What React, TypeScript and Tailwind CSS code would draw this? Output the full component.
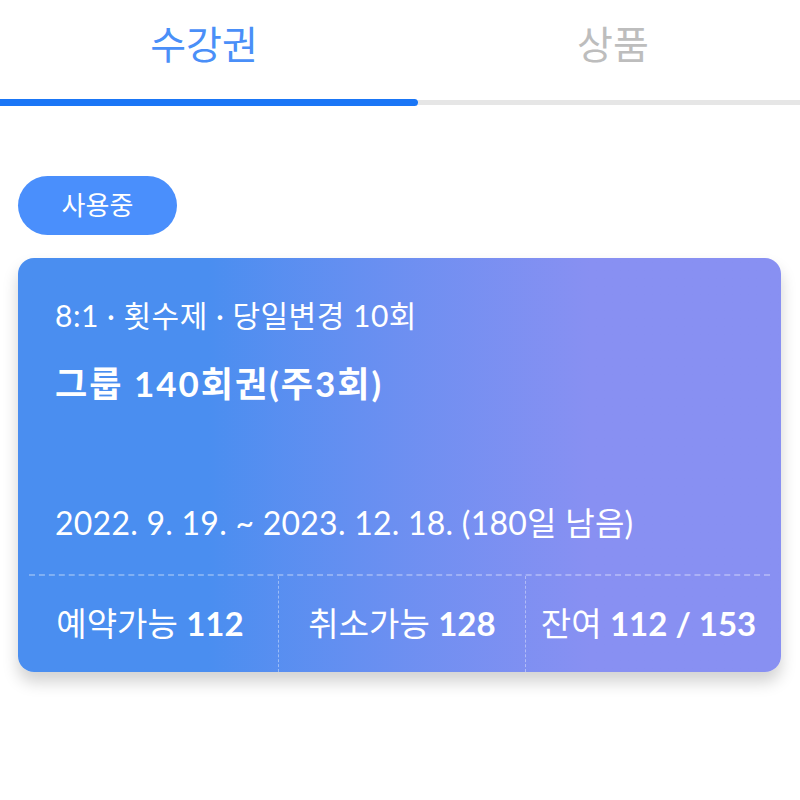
export default function App() {
  const font = { fontFamily: 'Lato, "Noto Sans CJK KR", sans-serif' };
  return (
    <div className="w-[800px] h-[800px] bg-white overflow-hidden" style={font}>
      <div className="flex h-[98px]">
        <div className="w-[418px] flex justify-center items-center pb-[10px] pr-[10px] text-[39px] text-[#4a8ff8]">수강권</div>
        <div className="flex-1 flex justify-center items-center pb-[10px] pl-[8px] text-[39px] text-[#bdbdbd]">상품</div>
      </div>
      <div className="flex items-center h-[8px]">
        <div className="w-[418px] h-[7px] bg-[#1a76f6] rounded-r-full"></div>
        <div className="flex-1 h-[5px] bg-[#e6e6e6]"></div>
      </div>
      <div className="px-[18px] pt-[70px]">
        <div className="w-[159px] h-[59px] rounded-full bg-[#4a8ffc] text-white text-[26px] flex items-center justify-center">사용중</div>
        <div className="mt-[23px] w-[763px] h-[414px] rounded-[16px] bg-linear-to-r from-[#4a8ef0] from-25% to-[#8890f2] to-75% text-white shadow-[0_10px_16px_rgba(0,0,0,0.18)] flex flex-col">
          <div className="px-[37px] pt-[37px] flex-1 flex flex-col">
            <div className="text-[30px] leading-[40px] tracking-[0.5px]">8:1 · 횟수제 · 당일변경 10회</div>
            <div className="text-[35px] font-bold leading-[40px] mt-[28px] tracking-[2px]">그룹 140회권(주3회)</div>
            <div className="text-[32px] leading-[40px] mt-auto mb-[31px] tracking-[0.25px]">2022. 9. 19. ~ 2023. 12. 18. (180일 남음)</div>
          </div>
          <div className="mx-[11px] border-t-2 border-dashed border-white/30"></div>
          <div className="flex h-[96px] text-[33px]">
            <div className="w-[260px] flex items-center justify-center pl-[4px]">예약가능&nbsp;<span className="font-bold">112</span></div>
            <div className="w-[247px] flex items-center justify-center border-l border-dashed border-white/40">취소가능&nbsp;<span className="font-bold">128</span></div>
            <div className="flex-1 flex items-center justify-center border-l border-dashed border-white/40 pr-[10px]">잔여&nbsp;<span className="font-bold">112 / 153</span></div>
          </div>
        </div>
      </div>
    </div>
  );
}
